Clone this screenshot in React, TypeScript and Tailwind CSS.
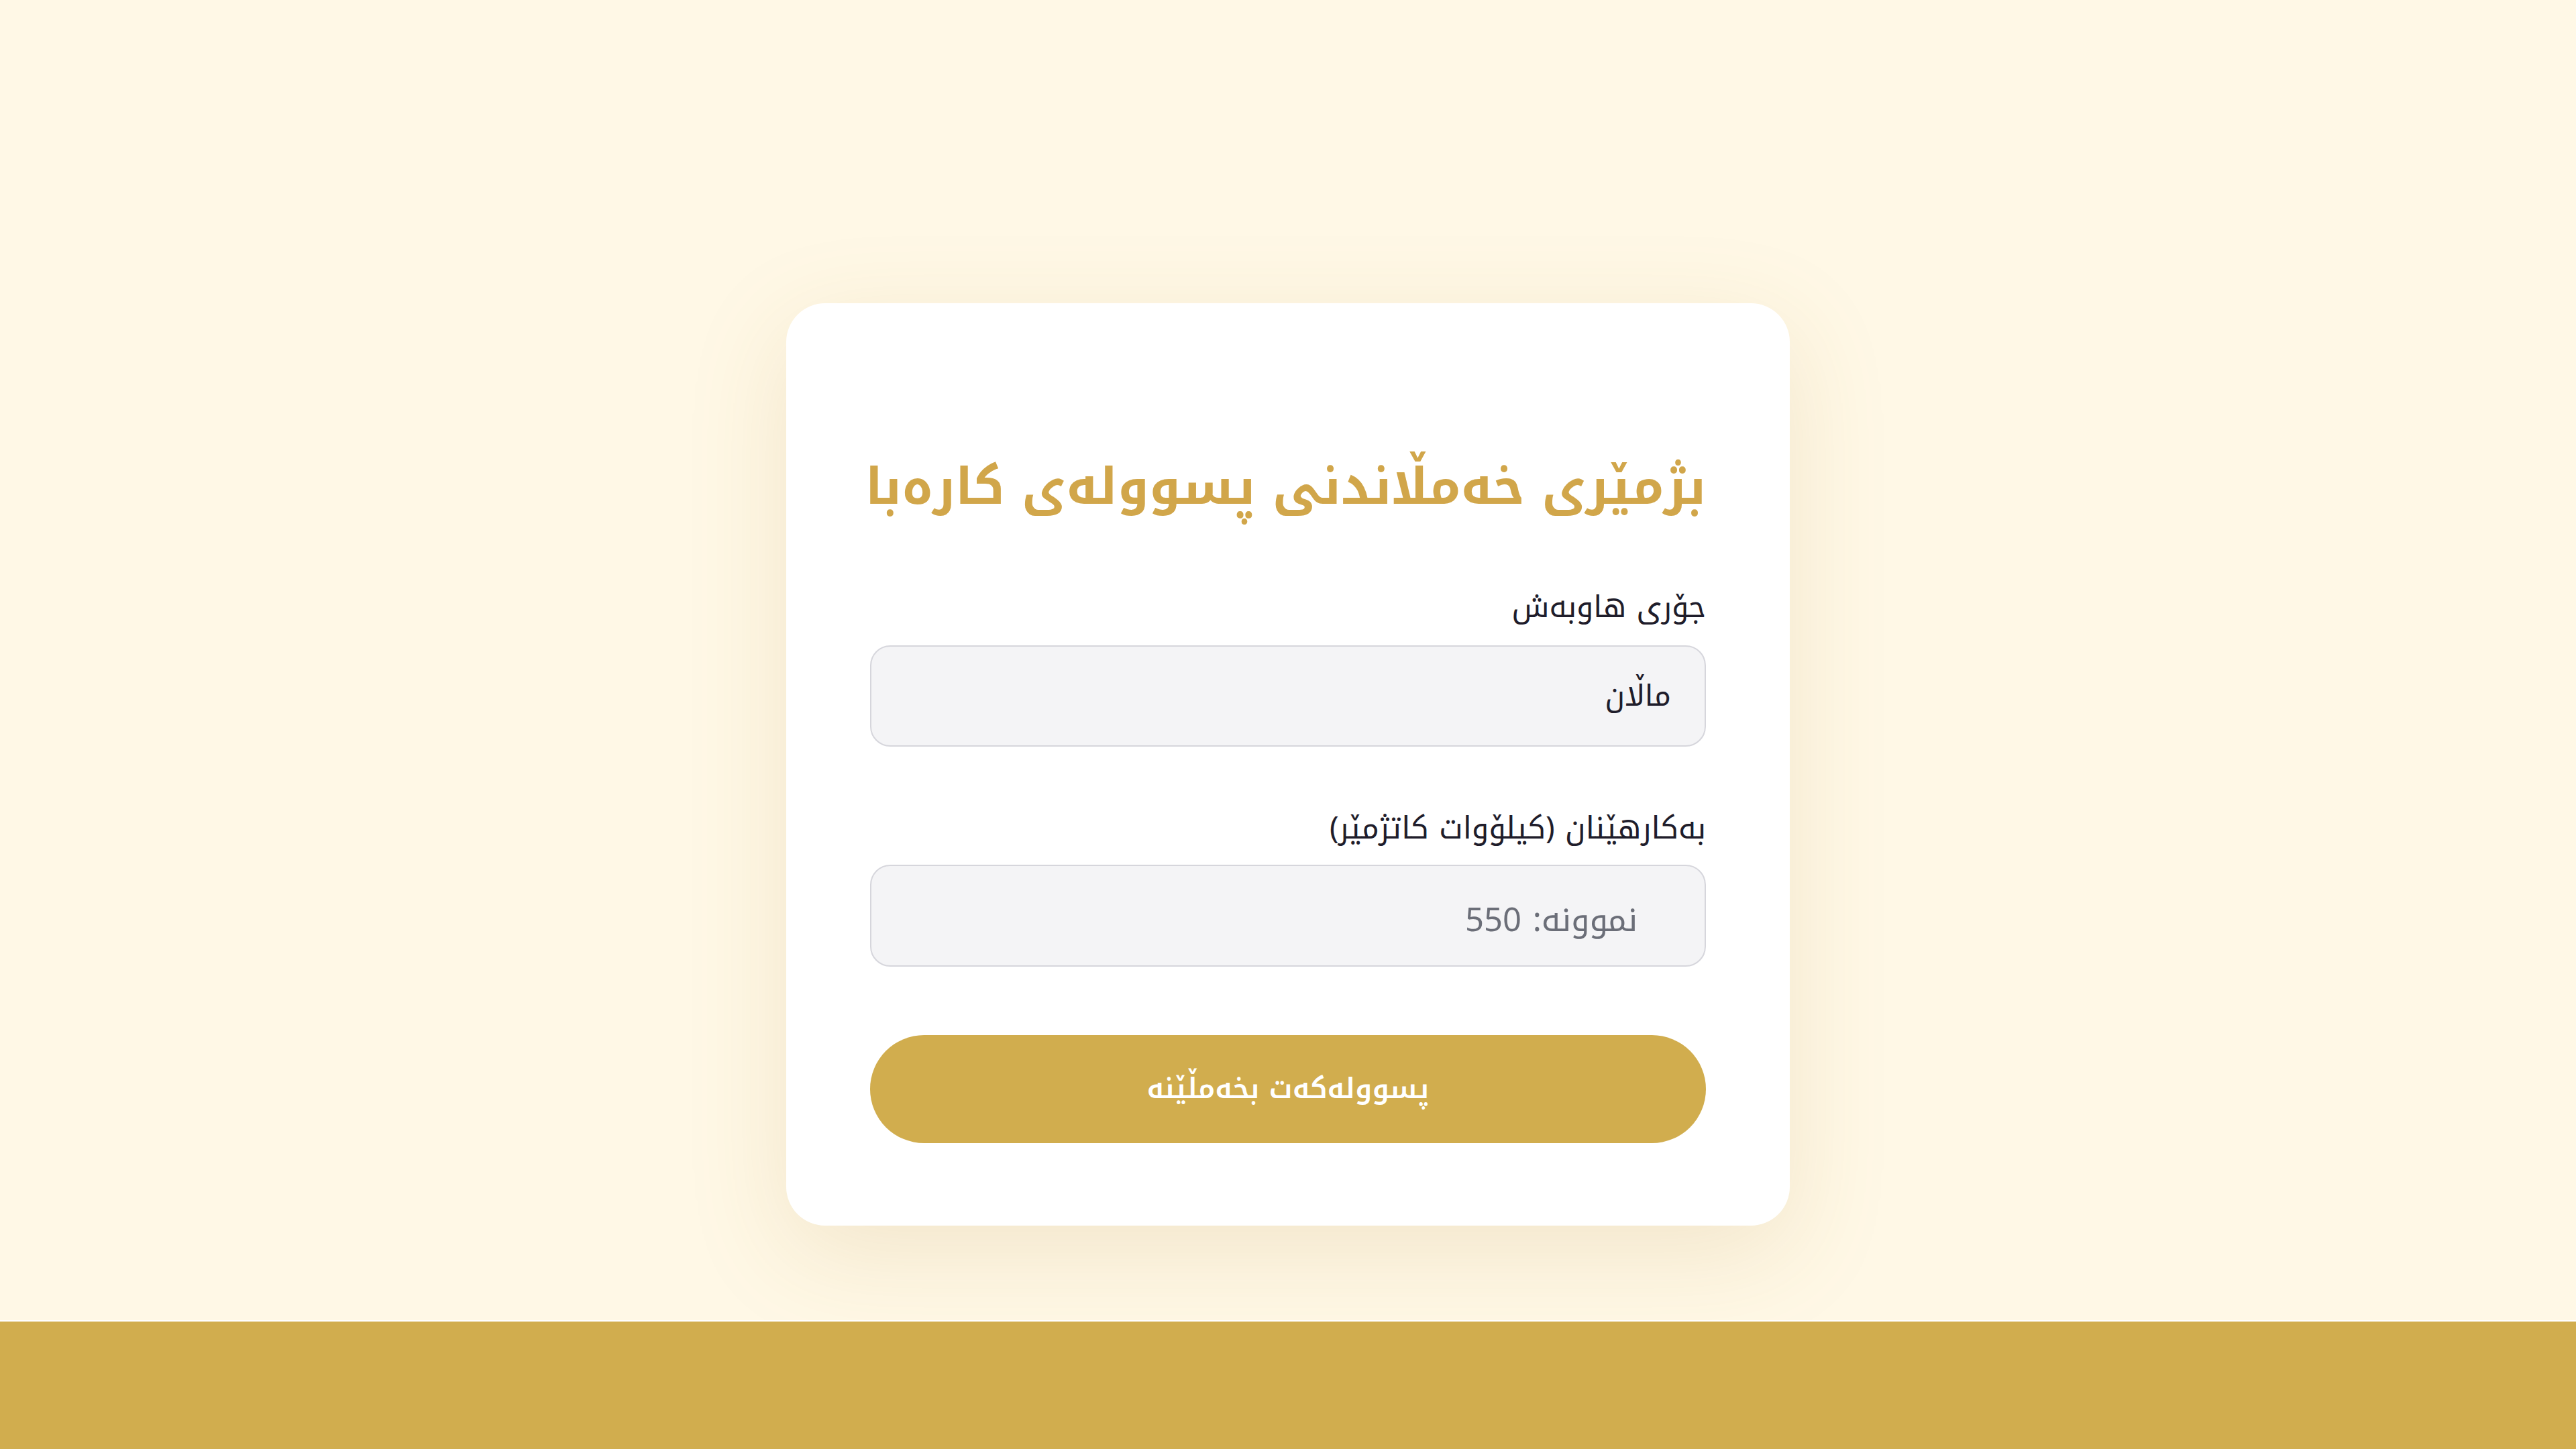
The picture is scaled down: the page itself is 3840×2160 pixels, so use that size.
const kufi = { fontFamily: '"Noto Kufi Arabic", "Noto Sans", sans-serif' }

export default function App() {
  return (
    <div dir="rtl" className="flex min-h-screen flex-col bg-white" style={kufi}>
      {/* Calculator */}
      <main className="flex h-[1968px] justify-center bg-[#fff8e6] pt-[452px]">
        <div className="flex h-[1375px] w-[1496px] flex-col rounded-[58px] bg-white px-[125px] pt-[208px] shadow-[0_40px_150px_rgba(170,130,50,0.15)]">
          <h1 className="whitespace-nowrap text-right text-[75px] font-bold leading-[132px] text-[#d1a64a]">
            بژمێری خەمڵاندنی پسوولەی کارەبا
          </h1>

          <label className="mt-[80px] block text-right text-[45px] leading-[66px] text-[#1f1d2b]">
            جۆری هاوبەش
          </label>
          <select className="mt-[24px] h-[151px] w-full appearance-none rounded-[30px] border-2 border-[#d6d6dc] bg-[#f4f4f6] pr-[50px] pl-[50px] text-right text-[44px] text-[#1f1d2b] outline-none">
            <option>ماڵان</option>
            <option>بازرگانی</option>
            <option>پیشەسازی</option>
          </select>

          <label className="mt-[89px] block text-right text-[45.5px] leading-[66px] text-[#1f1d2b]">
            بەکارهێنان (کیلۆوات کاتژمێر)
          </label>
          <input
            type="text"
            inputMode="numeric"
            placeholder="نموونە: 550"
            className="mt-[21px] h-[152px] w-full rounded-[30px] border-2 border-[#d6d6dc] bg-[#f4f4f6] pt-[12px] pr-[100px] pl-[50px] text-right text-[49px] text-[#1f1d2b] outline-none placeholder:text-[#6b6e78]"
          />

          <button
            type="button"
            className="mt-[102px] h-[161px] w-full rounded-full bg-[#d1ad4e] text-[42px] font-semibold text-white"
          >
            پسوولەکەت بخەمڵێنە
          </button>
        </div>
      </main>

      {/* Footer */}
      <footer className="h-[192px] border-t-2 border-white bg-[#d1ad4e]" />
    </div>
  )
}
